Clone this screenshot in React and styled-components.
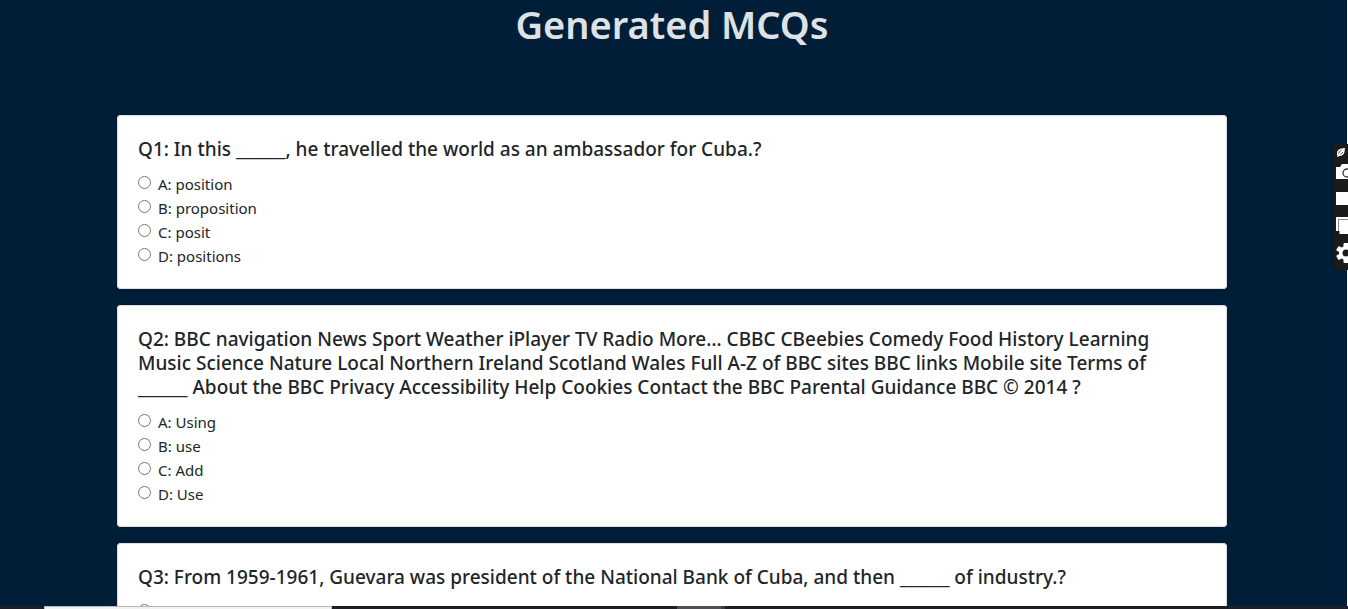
import React from "react";
import styled, { createGlobalStyle } from "styled-components";

const Global = createGlobalStyle`
  * { box-sizing: border-box; }
  html { background: #fff; }
  body {
    margin: 0;
    overflow: hidden;
    font-family: "Noto Sans", "Open Sans", sans-serif;
    font-size: 15px;
    line-height: 24px;
    color: #212529;
  }
`;

const Page = styled.div`
  height: 100vh;
  overflow: hidden;
  margin-right: 1px;
  padding-right: 3px;
  background: #001e37;
`;

const Container = styled.main`
  max-width: 1140px;
  margin: 0 auto;
  padding: 0 15px;
`;

const Heading = styled.h1`
  margin: 0 0 67px;
  font-size: 38px;
  font-weight: 600;
  line-height: 48px;
  text-align: center;
  color: #dee2e6;
`;

const Card = styled.fieldset`
  min-width: 0;
  margin: 0 0 16px;
  padding: 21px 20px 20px;
  border: 1px solid #dfdfdf;
  border-radius: 4px;
  background: #fff;
`;

const Question = styled.h2`
  margin: 0 0 11px;
  padding-right: 32px;
  font-size: 19px;
  font-weight: 500;
  line-height: 24px;
`;

const Option = styled.label`
  display: flex;
  align-items: flex-start;
  gap: 7px;
`;

const Radio = styled.input`
  width: 13px;
  height: 13px;
  margin: 4px 0 0;
`;

const Tools = styled.aside`
  position: fixed;
  top: 144px;
  right: 0;
  width: 14px;
  height: 126px;
  svg { display: block; }
`;

const Taskbar = styled.footer`
  position: fixed;
  left: 0;
  right: 0;
  bottom: 0;
  display: flex;
  height: 3px;
  background: #1f1e27;
`;

const SearchBox = styled.div`
  width: 288px;
  margin-left: 44px;
  border: 1px solid #b9b9b9;
  border-bottom: 0;
  background: #f2f2f2;
`;

const ActiveTask = styled.div`
  width: 48px;
  margin-left: 345px;
  border-right: 4px solid #3c3c43;
  background: #505058;
`;

const questions = [
  {
    text: "In this ______, he travelled the world as an ambassador for Cuba.?",
    options: ["position", "proposition", "posit", "positions"],
  },
  {
    text: "BBC navigation News Sport Weather iPlayer TV Radio More… CBBC CBeebies Comedy Food History Learning Music Science Nature Local Northern Ireland Scotland Wales Full A-Z of BBC sites BBC links Mobile site Terms of ______ About the BBC Privacy Accessibility Help Cookies Contact the BBC Parental Guidance BBC © 2014 ?",
    options: ["Using", "use", "Add", "Use"],
  },
  {
    text: "From 1959-1961, Guevara was president of the National Bank of Cuba, and then ______ of industry.?",
    options: [""],
  },
];

export default function App() {
  return (
    <>
      <Global />
      <Page>
        <Container>
          <Heading>Generated MCQs</Heading>
          {questions.map((q, i) => (
            <Card key={i} aria-labelledby={`q${i}`}>
              <Question id={`q${i}`}>{`Q${i + 1}: ${q.text}`}</Question>
              {q.options.map((o, n) => (
                <Option key={n}>
                  <Radio
                    type="radio"
                    name={`question-${i}`}
                    value={"ABCD"[n]}
                    aria-label={o ? undefined : "ABCD"[n]}
                  />
                  {o && <span>{`${"ABCD"[n]}: ${o}`}</span>}
                </Option>
              ))}
            </Card>
          ))}
        </Container>
      </Page>
      <Tools aria-label="Capture tools">
        <svg width="14" height="126" viewBox="0 0 14 126">
          <path d="M2 0H14V126H2Q0 126 0 124V2Q0 0 2 0Z" fill="#1b1b1b" />
          <path d="M3 9Q3 5.500 7 4.500L11 4L10.500 8Q9.500 12 5.500 12L3.500 13L3 11Z" fill="#f5f5f5" />
          <path d="M4.500 9.500Q5 7 7.500 6M6.500 10.500L9 8" fill="none" stroke="#1b1b1b" strokeWidth="0.7" />
          <path d="M2 23H6L8 20H14V35H2Z" fill="#fff" />
          <circle cx="13" cy="29" r="4" fill="none" stroke="#333" strokeWidth="1.3" />
          <rect x="2" y="48" width="12" height="13" fill="#fff" />
          <path d="M2 73H14V75H4V87H2Z" fill="#fff" />
          <path d="M4.500 75.500H18V90H5.500V87H4.500Z" fill="#fff" />
          <path d="M4.500 87V75.500H14" fill="none" stroke="#888" />
          <g transform="translate(12 109)">
            <g fill="#fff">
              {[0, 60, 120].map((a) => (
                <rect key={a} x="-2.500" y="-10" width="5" height="20" rx="1" transform={`rotate(${a})`} />
              ))}
              <circle r="7" />
            </g>
            <circle r="3.500" fill="#1b1b1b" />
          </g>
        </svg>
      </Tools>
      <Taskbar>
        <SearchBox />
        <ActiveTask />
      </Taskbar>
    </>
  );
}
